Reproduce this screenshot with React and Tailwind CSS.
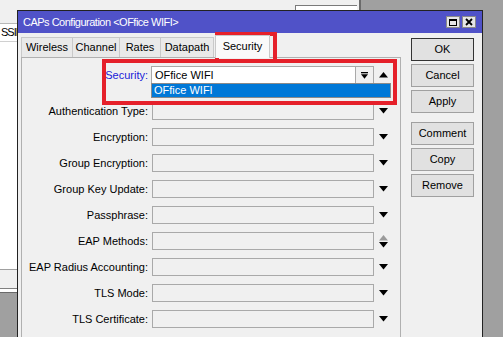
import React from 'react';

const FONT = { fontFamily: '"Liberation Sans", Arial, sans-serif' };

function DownArrow({ muted }) {
  return (
    <svg width="9" height="6" viewBox="0 0 9 6" className="block">
      <polygon points="0,0 9,0 4.5,5.5" fill={muted ? '#9a9a9a' : '#000'} />
    </svg>
  );
}

function UpArrow({ muted }) {
  return (
    <svg width="9" height="6" viewBox="0 0 9 6" className="block">
      <polygon points="0,5.5 9,5.5 4.5,0" fill={muted ? '#9a9a9a' : '#000'} />
    </svg>
  );
}

function FieldRow({ label, updown, className = '' }) {
  return (
    <div className={`flex items-center h-[18px] ${className}`}>
      <span className="w-[126px] text-right text-[11px] text-black whitespace-nowrap">{label}:</span>
      <div className="ml-[4px] w-[222px] h-[18px] border border-[#a9a9a9] bg-[#f0f0f0]" />
      <div className="ml-[5px] w-[9px] flex flex-col items-center gap-[1px]">
        {updown ? (
          <>
            <UpArrow muted />
            <DownArrow />
          </>
        ) : (
          <DownArrow />
        )}
      </div>
    </div>
  );
}

function Btn({ children, primary, className = '' }) {
  return (
    <div
      className={`w-[63px] h-[23px] flex items-center justify-center text-[11px] text-black bg-[#e1e1e1] border ${
        primary ? 'border-[#333]' : 'border-[#a0a0a0]'
      } ${className}`}
    >
      {children}
    </div>
  );
}

export default function App() {
  const tabs = [
    { name: 'Wireless', w: 'w-[52px]' },
    { name: 'Channel', w: 'w-[48px]' },
    { name: 'Rates', w: 'w-[42px]' },
    { name: 'Datapath', w: 'w-[54px]' },
  ];

  const fields = [
    'Authentication Type',
    'Encryption',
    'Group Encryption',
    'Group Key Update',
    'Passphrase',
    'EAP Methods',
    'EAP Radius Accounting',
    'TLS Mode',
    'TLS Certificate',
  ];

  return (
    <div className="relative w-[503px] h-[337px] overflow-hidden bg-[#a0a0a0]" style={FONT}>
      {/* window behind */}
      <div className="absolute left-0 top-0 w-[361px] h-[293px] bg-[#f0f0f0] border-r-2 border-b border-[#6a6a6a] flex flex-col">
        <div className="h-[23px] relative">
          <div className="absolute left-[295px] top-[5px] w-[62px] h-[18px] bg-white border-t border-l border-[#7a7a7a]" />
        </div>
        <div className="h-[246px] bg-white border-t border-[#b8b8b8]">
          <div className="h-[18px] border-b border-[#d0d0d0] flex items-center text-[11px] text-black pl-[1px] bg-white tracking-[-1px]">
            SSID
          </div>
        </div>
        <div className="flex-1 border-t border-[#a0a0a0] border-b border-b-[#808080]" />
        <div className="h-[3px] bg-white" />
      </div>

      {/* dialog */}
      <div className="absolute left-[17px] top-[10px] w-[466px] h-[340px] border border-[#222] bg-[#f0f0f0] flex flex-col">
        <div className="h-[22px] bg-[#5052c8] flex items-center justify-between pl-[5px] pr-[6px]">
          <span className="text-[11px] text-white tracking-[-0.5px]">CAPs Configuration &lt;OFfice WIFI&gt;</span>
          <div className="flex gap-[2px]">
            <div className="w-[14px] h-[12px] bg-[#e6e6e6] border border-[#8a8a8a] flex items-center justify-center">
              <div className="w-[8px] h-[7px] border border-black border-t-2" />
            </div>
            <div className="w-[14px] h-[12px] bg-[#e6e6e6] border border-[#8a8a8a] flex items-center justify-center">
              <svg width="8" height="8" viewBox="0 0 8 8">
                <path d="M1 1 L7 7 M7 1 L1 7" stroke="#000" strokeWidth="1.8" />
              </svg>
            </div>
          </div>
        </div>

        <div className="flex flex-1">
          {/* tabs + panel */}
          <div className="w-[383px] pl-[3px] flex flex-col">
            <div className="h-[24px] flex items-end">
              {tabs.map((t) => (
                <div
                  key={t.name}
                  className={`${t.w} h-[20px] bg-[#e9e9e9] border border-b-0 border-[#c9c9c9] flex items-center justify-center text-[11px] text-black -ml-px first:ml-0`}
                >
                  {t.name}
                </div>
              ))}
              <div className="relative z-10 ml-[1px] -mb-px w-[55px] h-[23px] bg-[#fafafa] border border-b-0 border-[#c9c9c9] flex items-center justify-center text-[11px] text-black pb-[2px]">
                Security
              </div>
            </div>

            <div className="relative flex-1 border border-[#b0b0b0] bg-[#f0f0f0] flex flex-col">
              <div className="flex items-center h-[18px] mt-[8px]">
                <span className="w-[126px] text-right text-[11px] text-[#1b1bd8]">Security:</span>
                <div className="ml-[3px] w-[205px] h-[18px] bg-white border border-[#a9a9a9] flex items-center pl-[3px] text-[11px] text-black">
                  OFfice WIFI
                </div>
                <div className="w-[18px] h-[18px] border border-l-0 border-[#a9a9a9] flex items-center justify-center">
                  <svg width="7" height="7" viewBox="0 0 7 7">
                    <rect x="0" y="0" width="7" height="1.3" fill="#000" />
                    <polygon points="0,2.2 7,2.2 3.5,6.8" fill="#000" />
                  </svg>
                </div>
                <div className="ml-[5px] w-[9px] flex justify-center">
                  <UpArrow />
                </div>
              </div>

              {fields.map((f, i) => (
                <FieldRow
                  key={f}
                  label={f}
                  updown={f === 'EAP Methods'}
                  className={i === 0 ? 'mt-[18px]' : 'mt-[8px]'}
                />
              ))}

              {/* open dropdown list */}
              <div className="absolute left-[129px] top-[25px] w-[240px] h-[15px] bg-[#0078d7] border border-[#8a8a8a] flex items-center pl-[2px] text-[11px] text-white">
                OFfice WIFI
              </div>
            </div>
          </div>

          {/* buttons */}
          <div className="flex-1 pt-[5px] pl-[10px] flex flex-col">
            <Btn primary>OK</Btn>
            <Btn className="mt-[3px]">Cancel</Btn>
            <Btn className="mt-[3px]">Apply</Btn>
            <Btn className="mt-[9px]">Comment</Btn>
            <Btn className="mt-[3px]">Copy</Btn>
            <Btn className="mt-[3px]">Remove</Btn>
          </div>
        </div>
      </div>

      {/* red highlight boxes */}
      <div className="absolute left-[215px] top-[32px] w-[62px] h-[31px] border-4 border-[#e5202a]" />
      <div className="absolute left-[102px] top-[59px] w-[295px] h-[46px] border-4 border-[#e5202a]" />
    </div>
  );
}
